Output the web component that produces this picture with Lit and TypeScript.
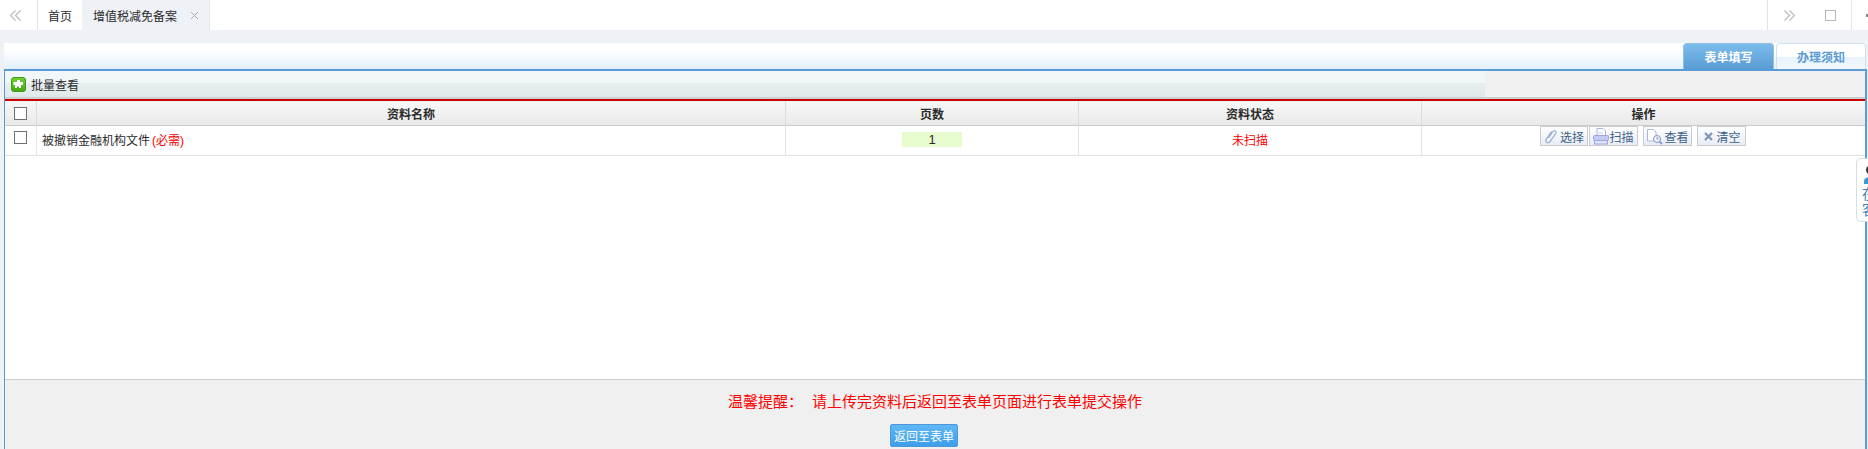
import { LitElement, html, css, svg } from "lit";
import { customElement } from "lit/decorators.js";

const clip = svg`<svg width="14" height="17" viewBox="0 0 14 17" fill="none" stroke="#9db1d2" stroke-width="1.300"><path d="M4.500 10 9 3.500c1.300-1.800 4-.2 2.800 1.900L6 13.500c-1.700 2.500-5.500.5-3.800-2.300L7.500 3.500"/></svg>`;
const printer = svg`<svg width="16" height="17" viewBox="0 0 16 17"><path d="M4 .5h6l2.500 2.500v5H4z" fill="#fff" stroke="#aab4e6"/><rect x=".5" y="7.500" width="15" height="5" rx="1" fill="#c3cbf2" stroke="#9aa6df"/><rect x="1.500" y="12.500" width="13" height="3.500" fill="#dfe3f8" stroke="#9aa6df"/><path d="M5 5h5" stroke="#c3cbf2"/></svg>`;
const docSearch = svg`<svg width="18" height="17" viewBox="0 0 18 17" fill="none"><path d="M1.500 1.500h6l2.500 2.500v9h-8.500z" fill="#fff" stroke="#a9b6e3"/><circle cx="11" cy="11" r="3.500" fill="#f4f6fd" stroke="#8394bd"/><path d="M13.500 13.500 16 16" stroke="#8c9be6" stroke-width="2"/><path d="M11 9v2h1.500" stroke="#8394bd"/></svg>`;
const cross = svg`<svg width="14" height="17" viewBox="0 0 14 17" fill="none" stroke="#7f95b8" stroke-width="2.200"><path d="M3 5l7 7M10 5l-7 7"/></svg>`;

@customElement("app-root")
export class AppRoot extends LitElement {
  static styles = css`
    :host {
      display: flex;
      flex-direction: column;
      position: relative;
      height: 449px;
      overflow: hidden;
      background: #eef1f5;
      font-family: "Liberation Sans", "Noto Sans CJK SC", sans-serif;
      font-size: 12px;
      color: #2b2b2b;
    }
    .top {
      height: 30px;
      flex: none;
      background: #fff;
      display: flex;
      align-items: stretch;
      margin-bottom: 13px;
    }
    .nav {
      width: 37px;
      border-right: 1px solid #dfe3e8;
      display: flex;
      align-items: center;
      justify-content: flex-start;
      background: #fff;
    }
    .nav svg { margin-left: 10px; }
    .tab {
      display: flex;
      align-items: center;
      white-space: nowrap;
    }
    .home {
      width: 44px;
      justify-content: center;
    }
    .cur {
      width: 128px;
      box-sizing: border-box;
      background: #eef1f5;
      border-right: 1px solid #e3e7ec;
      padding-left: 11px;
      gap: 13px;
    }
    .spacer { flex: 1; }
    .rbtn {
      border-left: 1px solid #dfe3e8;
      display: flex;
      align-items: center;
      justify-content: center;
    }
    .rnav { width: 42px; }
    .rmax { width: 41px; border-left: none; }
    .rdot {
      width: 16px;
      border-left: 1px solid #dfe3e8;
      display: flex;
      align-items: center;
      justify-content: flex-end;
    }
    .dot { width: 2px; height: 3px; background: #888; }
    .strip {
      height: 26px;
      flex: none;
      margin: 0 2px 0 4px;
      background: linear-gradient(#fff 25%, #e3f0fb);
      display: flex;
      justify-content: flex-end;
      gap: 2px;
    }
    .stab {
      width: 91px;
      box-sizing: border-box;
      border-radius: 4px 4px 0 0;
      display: flex;
      align-items: center;
      justify-content: center;
      font-weight: bold;
    }
    .stab.on {
      color: #fff;
      background: linear-gradient(#7cbdec, #5a9bd5);
      border: 1px solid #8fc0e6;
      border-bottom: none;
    }
    .stab.off {
      width: 90px;
      color: #5b9bd5;
      background: linear-gradient(#fff 50%, #e8f2fb 50%, #f2f8fd);
      border: 1px solid #cfe0ef;
      border-bottom: none;
    }
    .panel {
      flex: 1;
      margin: 0 1px 0 4px;
      border: 2px solid #5b9bd5;
      border-width: 2px 2px 0 1px;
      display: flex;
      flex-direction: column;
      min-height: 0;
      background: #fff;
    }
    .bar {
      height: 26px;
      flex: none;
      display: flex;
      border-bottom: 2px solid #c9d1d3;
    }
    .bar-left {
      width: 1480px;
      display: flex;
      align-items: center;
      gap: 5px;
      padding-left: 6px;
      box-sizing: border-box;
      background: linear-gradient(#f1f6f8 0 45%, #e7eef0 45%, #e0e9ea);
    }
    .bar-right { flex: 1; background: #f0f0f0; }
    .redline { height: 2px; flex: none; background: #c00; }
    .grid {
      display: grid;
      grid-template-columns: 32px 749px 293px 343px 1fr;
      flex: none;
    }
    .head > div {
      height: 24px;
      border-right: 1px solid #dcdcdc;
      border-bottom: 1px solid #ccc;
      background: linear-gradient(#f8f8f8, #e9e9e9);
      font-weight: bold;
      display: flex;
      align-items: center;
      justify-content: center;
    }
    .head > div:last-child, .row > div:last-child { border-right: none; }
    .row > div {
      height: 27px;
      padding-bottom: 2px;
      border-right: 1px solid #e2e2e2;
      border-bottom: 1px solid #e2e2e2;
      display: flex;
      align-items: center;
      justify-content: center;
    }
    .row > .name { justify-content: flex-start; padding-left: 5px; }
    .row > .chk { align-items: flex-start; padding: 5px 0 0; height: 24px; }
    .row > .ops { align-items: flex-start; padding: 0; height: 29px; }
    .req { color: #f00; margin-left: 2px; }
    .count {
      width: 60px;
      height: 15px;
      background: #e6fccf;
      text-align: center;
      line-height: 15px;
      font-family: "Liberation Sans", sans-serif;
      font-size: 13px;
    }
    .warn { color: #f00; }
    input[type="checkbox"] {
      appearance: none;
      box-sizing: border-box;
      width: 13px;
      height: 13px;
      margin: 0;
      background: #fff;
      border: 1px solid #707070;
    }
    .ops-in { display: flex; margin-right: 1px; }
    .btn {
      box-sizing: border-box;
      height: 20px;
      border: 1px solid #cbcbcb;
      background: linear-gradient(#fff, #e8ecf5);
      color: #3d6288;
      display: flex;
      align-items: center;
      justify-content: center;
      white-space: nowrap;
      width: 49px;
    }
    .btn.first { width: 48px; gap: 2px; }
    .btn.gap { margin-left: 5px; }
    .btn.tight { margin-left: 1px; }
    .blank { flex: 1; border-bottom: 1px solid #ccc; background: #fff; }
    .foot {
      height: 69px;
      flex: none;
      background: #f0f0f0;
      display: flex;
      flex-direction: column;
      align-items: center;
      padding-top: 12px;
      box-sizing: border-box;
    }
    .notice {
      color: #f00;
      font-size: 15px;
      line-height: 20px;
      display: flex;
      gap: 9px;
      white-space: nowrap;
    }
    .back {
      margin: 12px 22px 0 0;
      width: 68px;
      height: 23px;
      box-sizing: border-box;
      color: #fff;
      border: 1px solid #4f97d8;
      border-radius: 2px;
      background: linear-gradient(#5fb7f5, #3d9fea);
      display: flex;
      align-items: center;
      justify-content: center;
      white-space: nowrap;
    }
    .float {
      position: absolute;
      left: 1856px;
      top: 158px;
      width: 24px;
      height: 64px;
      box-sizing: border-box;
      background: #fff;
      border: 1px solid #d4dfe9;
      border-radius: 5px;
      color: #3f7fb6;
      font-size: 14px;
      line-height: 16px;
      padding: 5px 0 0 5px;
    }
    .float svg { display: block; margin-bottom: 2px; }
  `;

  render() {
    return html`
      <div class="top">
        <div class="nav">
          <svg width="11" height="11" viewBox="0 0 11 11" fill="none" stroke="#b5b8bd" stroke-width="1.200"><path d="M5.500 .5l-5 5 5 5M10.500 .5l-5 5 5 5" /></svg>
        </div>
        <div class="tab home">首页</div>
        <div class="tab cur">
          <span>增值税减免备案</span>
          <svg width="9" height="9" viewBox="0 0 9 9" fill="none" stroke="#a9adb3" stroke-width="1"><path d="M1 1l7 7M8 1 1 8" /></svg>
        </div>
        <div class="spacer"></div>
        <div class="rbtn rnav">
          <svg width="11" height="11" viewBox="0 0 11 11" fill="none" stroke="#b5b8bd" stroke-width="1.200"><path d="M.5 .5l5 5-5 5M5.500 .5l5 5-5 5" /></svg>
        </div>
        <div class="rmax rbtn">
          <svg width="11" height="11" viewBox="0 0 11 11" fill="none" stroke="#b5b8bd"><rect x="0.500" y="0.500" width="10" height="10" /></svg>
        </div>
        <div class="rdot"><span class="dot"></span></div>
      </div>

      <div class="strip">
        <div class="stab on">表单填写</div>
        <div class="stab off">办理须知</div>
      </div>

      <div class="panel">
        <div class="bar">
          <div class="bar-left">
            <svg width="15" height="15" viewBox="0 0 15 15"><defs><linearGradient id="g" x1="0" y1="0" x2="0" y2="1"><stop offset="0" stop-color="#73d033" /><stop offset="1" stop-color="#46a818" /></linearGradient></defs><rect x="0.500" y="0.500" width="14" height="14" rx="2.500" fill="url(#g)" stroke="#3f9a17" /><path d="M6 3h3v2h3v3h-2v3H8V9.500H6V11H4V8H2.500V5H6z" fill="#fff" /></svg>
            <span>批量查看</span>
          </div>
          <div class="bar-right"></div>
        </div>
        <div class="redline"></div>
        <div class="grid head">
          <div><input type="checkbox" /></div>
          <div>资料名称</div>
          <div>页数</div>
          <div>资料状态</div>
          <div>操作</div>
        </div>
        <div class="grid row">
          <div class="chk"><input type="checkbox" /></div>
          <div class="name">被撤销金融机构文件<span class="req">(必需)</span></div>
          <div><span class="count">1</span></div>
          <div class="warn">未扫描</div>
          <div class="ops">
            <div class="ops-in">
              <div class="btn first">${clip}选择</div>
              <div class="btn tight">${printer}扫描</div>
              <div class="btn gap">${docSearch}查看</div>
              <div class="btn gap">${cross}清空</div>
            </div>
          </div>
        </div>
        <div class="blank"></div>
        <div class="foot">
          <div class="notice"><span>温馨提醒：</span><span>请上传完资料后返回至表单页面进行表单提交操作</span></div>
          <div class="back">返回至表单</div>
        </div>
      </div>

      <div class="float">
        <svg width="14" height="20" viewBox="0 0 14 20"><circle cx="8" cy="6" r="4" fill="#333" /><path d="M2 20v-3c0-3 3-4 6-4s6 1 6 4v3z" fill="#3f97d8" /></svg>
        <div>在</div>
        <div>客</div>
      </div>
    `;
  }
}
